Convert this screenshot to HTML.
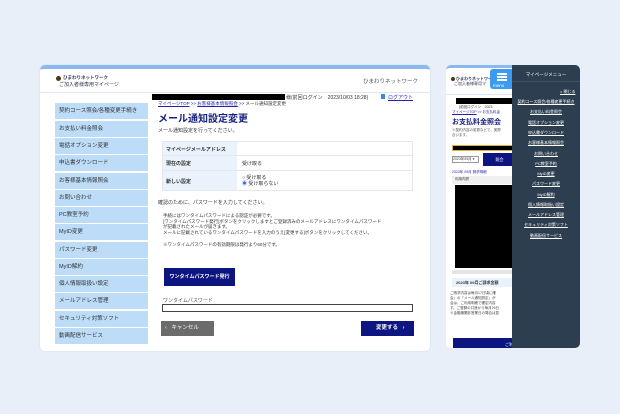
<!DOCTYPE html>
<html><head><meta charset="utf-8"><style>
*{margin:0;padding:0;box-sizing:border-box}
body{width:620px;height:414px;background:#e9eff9;font-family:"Liberation Sans","Noto Sans CJK JP",sans-serif;position:relative;overflow:hidden;color:#333}
.a{position:absolute}
.t{font-size:5px;white-space:nowrap}
.side div{position:absolute;left:0;width:93px;height:16px;background:#bcdcf8;font-size:5.5px;line-height:16px;padding-left:4px;color:#333}
.mm div{position:absolute;left:0;width:68px;text-align:center;font-size:4px;color:#fff;text-decoration:underline}
</style></head><body>
<!-- left panel -->
<div class="a" style="left:40px;top:65px;width:390px;height:286px;background:#fff;border-radius:5px;border-top:4px solid #8cb8f0;box-shadow:0 0 2px #cdd"></div>
<div class="a" style="left:40px;top:92px;width:390px;height:1px;background:#dde8f4"></div>
<div class="a" style="left:56px;top:76px;width:5px;height:5px;border-radius:50%;background:#4a3a10"></div>
<div class="a t" style="left:63px;top:75px;font-size:4.5px;color:#335;font-weight:bold">ひまわりネットワーク</div>
<div class="a t" style="left:59px;top:81px;font-size:5px;color:#335">ご加入者様専用マイページ</div>
<div class="a t" style="left:363px;top:77px;font-size:5.5px;color:#555">ひまわりネットワーク</div>
<div class="side">
<div style="left:55px;top:103px">契約コース照会/各種変更手続き</div>
<div style="left:55px;top:121px">お支払い料金照会</div>
<div style="left:55px;top:138px">電話オプション変更</div>
<div style="left:55px;top:155px">申込書ダウンロード</div>
<div style="left:55px;top:173px">お客様基本情報照会</div>
<div style="left:55px;top:190px">お問い合わせ</div>
<div style="left:55px;top:207px">PC教室予約</div>
<div style="left:55px;top:224px">MyID変更</div>
<div style="left:55px;top:242px">パスワード変更</div>
<div style="left:55px;top:259px">MyID解約</div>
<div style="left:55px;top:276px">個人情報取扱い設定</div>
<div style="left:55px;top:293px">メールアドレス管理</div>
<div style="left:55px;top:311px">セキュリティ対策ソフト</div>
<div style="left:55px;top:328px">動画配信サービス</div>
</div>
<div class="a" style="left:152px;top:94px;width:133px;height:6px;background:#000"></div>
<div class="a t" style="left:286px;top:94px;font-size:5px">様(前回ログイン　2023/10/03 18:28)</div>
<div class="a" style="left:381px;top:94px;width:4px;height:5px;background:#3a8be0"></div>
<div class="a t" style="left:388px;top:94px;color:#22a;text-decoration:underline">ログアウト</div>
<div class="a t" style="left:158px;top:101px;font-size:4.5px;color:#22a"><u>マイページTOP</u> &gt;&gt; <u>お客様基本情報照会</u> &gt;&gt; <span style="color:#333">メール通知設定変更</span></div>
<div class="a t" style="left:158px;top:110px;font-size:10px;font-weight:bold;color:#1a237e">メール通知設定変更</div>
<div class="a t" style="left:158px;top:127px">メール通知設定を行ってください。</div>
<div class="a" style="left:162px;top:141px;width:251px;height:50px;border:1px solid #e4e8ee;background:#fff"></div>
<div class="a" style="left:163px;top:142px;width:74px;height:48px;background:#eaf3fc"></div>
<div class="a" style="left:163px;top:155px;width:249px;height:1px;background:#e4e8ee"></div>
<div class="a" style="left:163px;top:170px;width:249px;height:1px;background:#e4e8ee"></div>
<div class="a t" style="left:166px;top:146px;font-weight:bold">マイページメールアドレス</div>
<div class="a t" style="left:166px;top:160px;font-weight:bold">現在の設定</div>
<div class="a t" style="left:242px;top:160px">受け取る</div>
<div class="a t" style="left:166px;top:178px;font-weight:bold">新しい設定</div>
<div class="a t" style="left:242px;top:174px">○ 受け取る</div>
<div class="a t" style="left:242px;top:180px"><span style="color:#2a6bd6">◉</span> 受け取らない</div>
<div class="a t" style="left:158px;top:199px">確認のために、パスワードを入力してください。</div>
<div class="a t" style="left:163px;top:213px;font-size:4.5px;line-height:5.7px">手続にはワンタイムパスワードによる認証が必要です。<br>[ワンタイムパスワード発行]ボタンをクリックしますとご登録済みのメールアドレスにワンタイムパスワード<br>が記載されたメールが届きます。<br>メールに記載されているワンタイムパスワードを入力のうえ[変更する]ボタンをクリックしてください。<br><br>※ワンタイムパスワードの有効期限は発行より60分です。</div>
<div class="a t" style="left:164px;top:268px;width:71px;height:18px;background:#0d1680;color:#fff;font-size:5px;font-weight:bold;line-height:18px;text-align:center">ワンタイムパスワード発行</div>
<div class="a t" style="left:163px;top:297px;color:#555">ワンタイムパスワード</div>
<div class="a" style="left:162px;top:304px;width:251px;height:8px;border:1px solid #444;background:#fff"></div>
<div class="a t" style="left:161px;top:321px;width:53px;height:15px;background:#6b6b6b;color:#fff;font-size:5.5px;line-height:15px;padding-left:4px">‹ &nbsp; キャンセル</div>
<div class="a t" style="left:361px;top:321px;width:53px;height:15px;background:#0d1680;color:#fff;font-size:5.5px;line-height:15px;padding-left:15px;font-weight:bold">変更する &nbsp; ›</div>
<!-- right phone -->
<div class="a" style="left:446px;top:65px;width:134px;height:283px;background:#fff;border-radius:5px;border-top:3px solid #8cb8f0;overflow:hidden">
<div class="a" style="left:5px;top:9px;width:4px;height:4px;border-radius:50%;background:#4a3a10"></div>
<div class="a t" style="left:10px;top:8px;font-size:4px;font-weight:bold;color:#335">ひまわりネットワーク</div>
<div class="a t" style="left:8px;top:13px;font-size:4px;color:#335">ご加入者様専用マ</div>
<div class="a" style="left:0;top:26px;width:70px;height:1px;background:#dde8f4"></div>
<div class="a" style="left:10px;top:30px;width:60px;height:6px;background:#000"></div>
<div class="a t" style="left:13px;top:37px;font-size:3.5px">(前回ログイン　2023</div>
<div class="a t" style="left:6px;top:42px;font-size:3.5px;color:#22a"><u>マイページTOP</u> &gt;&gt; お支払料金</div>
<div class="a t" style="left:6px;top:49px;font-size:7px;font-weight:bold;color:#1a237e">お支払料金照会</div>
<div class="a t" style="left:6px;top:60px;font-size:3.5px;line-height:5px;color:#555">※契約内容の変更などで、実際<br>合います。</div>
<div class="a" style="left:6px;top:77px;width:64px;height:6px;background:#000;border:1px solid #e0b040"></div>
<div class="a t" style="left:6px;top:88px;width:27px;height:7px;border:1px solid #999;font-size:3.5px;line-height:5px">2023年09月 ▾</div>
<div class="a" style="left:37px;top:85px;width:33px;height:13px;background:#0d1680;color:#fff;font-size:4px;line-height:13px;text-align:center">照会</div>
<div class="a t" style="left:6px;top:102px;font-size:3.5px;color:#22a">2023年 09月 請求明細</div>
<div class="a" style="left:6px;top:108px;width:64px;height:8px;background:#f0f0f0"></div>
<div class="a t" style="left:9px;top:109px;font-size:3.5px">利用内訳</div>
<div class="a" style="left:9px;top:117px;width:61px;height:83px;background:#000"></div>
<div class="a" style="left:6px;top:202px;width:64px;height:4px;background:#e5e5e5"></div>
<div class="a" style="left:6px;top:210px;width:64px;height:9px;background:#eaf3fc"></div>
<div class="a t" style="left:10px;top:212px;font-size:4px;font-weight:bold">2023年 09月ご請求金額</div>
<div class="a t" style="left:4px;top:223px;font-size:3.5px;line-height:5px;color:#444">ご請求内容は毎月17日頃に確<br>会」の「メール通知設定」が<br>会は、ご利用明細で確定内容<br>す。ご登録の口座から毎月26日<br>※金融機関非営業日の場合は翌</div>
<div class="a" style="left:7px;top:270px;width:63px;height:13px;background:#0d1680"></div>
<div class="a t" style="left:59px;top:274px;font-size:4px;color:#fff">ご利用</div>
</div>
<div class="a" style="left:490px;top:69px;width:24px;height:20px;background:#3b9bf0;border-radius:3px"></div>
<div class="a" style="left:497px;top:73px;width:10px;height:1.5px;background:#fff;box-shadow:0 3px 0 #fff,0 6px 0 #fff"></div>
<div class="a t" style="left:493px;top:83px;font-size:4.5px;color:#fff">menu</div>
<div class="a" style="left:512px;top:65px;width:68px;height:283px;background:#2c3e50;border-radius:0 5px 5px 0"></div>
<div class="a t" style="left:512px;top:72px;width:68px;text-align:center;font-size:4.5px;color:#fff">マイページメニュー</div>
<div class="a" style="left:512px;top:81px;width:68px;height:1px;background:#3e5266"></div>
<div class="a t" style="left:560px;top:89px;font-size:4px;color:#fff;text-decoration:underline">× 閉じる</div>
<div class="mm">
<div style="left:512px;top:99px">契約コース照会/各種変更手続き</div>
<div style="left:512px;top:109px">お支払い料金照会</div>
<div style="left:512px;top:120px">電話オプション変更</div>
<div style="left:512px;top:130px">申込書ダウンロード</div>
<div style="left:512px;top:140px">お客様基本情報照会</div>
<div style="left:512px;top:151px">お問い合わせ</div>
<div style="left:512px;top:161px">PC教室予約</div>
<div style="left:512px;top:171px">MyID変更</div>
<div style="left:512px;top:181px">パスワード変更</div>
<div style="left:512px;top:192px">MyID解約</div>
<div style="left:512px;top:202px">個人情報取扱い設定</div>
<div style="left:512px;top:212px">メールアドレス管理</div>
<div style="left:512px;top:222px">セキュリティ対策ソフト</div>
<div style="left:512px;top:233px">動画配信サービス</div>
</div>
</body></html>
